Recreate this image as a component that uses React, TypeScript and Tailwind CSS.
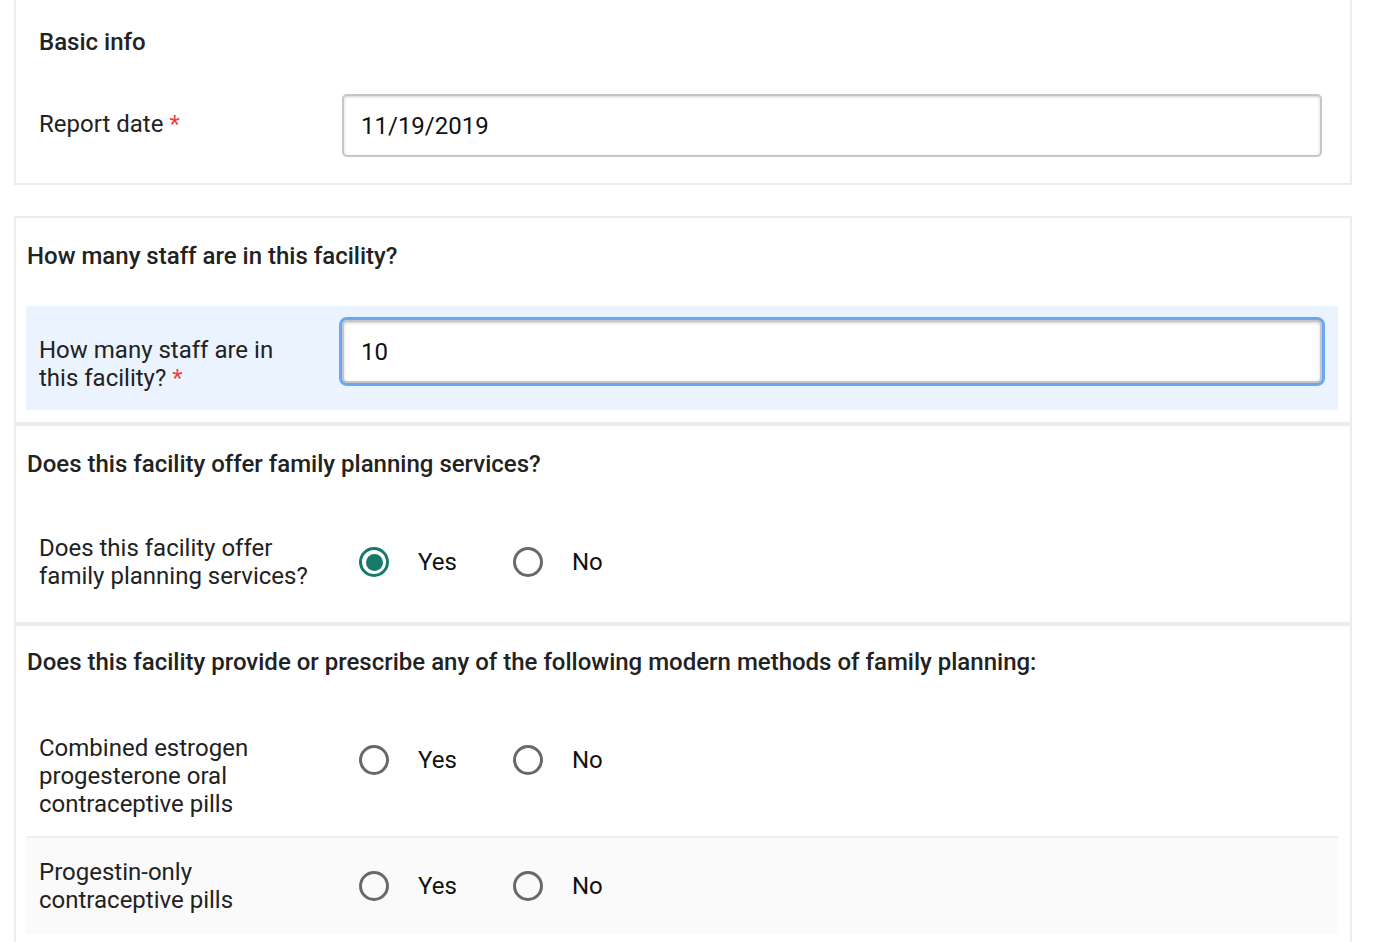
import React from "react";

const font = { fontFamily: "Roboto, 'Noto Sans', Arial, sans-serif" };

function Required() {
  return <span className="ml-[6px] text-[#ef4136]">*</span>;
}

function Label({ text, required }: { text: string; required?: boolean }) {
  return (
    <div className="w-[272px] pt-4 text-[24px] leading-[28px] text-[#222]">
      {text}
      {required && <Required />}
    </div>
  );
}

function TextInput({ value, focused }: { value: string; focused?: boolean }) {
  return (
    <div
      className={
        "flex h-[63px] items-center rounded-[5px] border-2 border-[#c6c6c6] bg-white pl-[17px] text-[24px] text-[#111] shadow-[inset_0_1px_3px_rgba(0,0,0,0.18)] " +
        (focused ? "outline-[3px] outline-solid outline-[#6aa6f4]" : "")
      }
    >
      {value}
    </div>
  );
}

function Radio({ checked }: { checked?: boolean }) {
  return (
    <div
      className={
        "flex h-[30px] w-[30px] items-center justify-center rounded-full border-[3px] " +
        (checked ? "border-[#157a6b]" : "border-[#686868]")
      }
    >
      {checked && <div className="h-[17px] w-[17px] rounded-full bg-[#157a6b]" />}
    </div>
  );
}

function YesNo({ value }: { value?: "yes" | "no" }) {
  return (
    <div className="flex h-14 items-center pl-[17px] text-[24px] text-[#111]">
      <div className="flex w-[154px] items-center">
        <Radio checked={value === "yes"} />
        <span className="ml-[29px]">Yes</span>
      </div>
      <div className="flex items-center">
        <Radio checked={value === "no"} />
        <span className="ml-[29px]">No</span>
      </div>
    </div>
  );
}

function SectionTitle({ children, tight }: { children: React.ReactNode; tight?: boolean }) {
  return (
    <h2
      className={
        "pl-[1px] text-[24px] leading-[28px] font-medium text-[#222] " + (tight ? "pt-[22px]" : "pt-6")
      }
    >
      {children}
    </h2>
  );
}

export default function App() {
  return (
    <div className="min-h-screen bg-white" style={font}>
      <div className="ml-[14px] w-[1338px]">
        {/* basic info */}
        <section className="border-2 border-t-0 border-[#e9edf1] pr-[12px] pb-[14px] pl-[10px]">
          <h2 className="pt-[28px] pl-[13px] text-[24px] leading-[28px] font-medium text-[#222]">
            Basic info
          </h2>
          <div className="mt-[26px] grid grid-cols-[303px_1fr] items-start pt-3 pr-4 pb-3 pl-[13px]">
            <Label text="Report date" required />
            <TextInput value="11/19/2019" />
          </div>
        </section>

        {/* staff */}
        <section className="mt-[31px] border-2 border-[#e9edf1] pr-[12px] pb-3 pl-[10px]">
          <SectionTitle>How many staff are in this facility?</SectionTitle>
          <div className="mt-9 grid grid-cols-[303px_1fr] items-start bg-[#ebf3fe] pt-[14px] pr-4 pb-[18px] pl-[13px]">
            <Label text="How many staff are in this facility?" required />
            <TextInput value="10" focused />
          </div>
        </section>

        {/* family planning */}
        <section className="border-2 border-[#e9edf1] pr-[12px] pb-3 pl-[10px]">
          <SectionTitle>Does this facility offer family planning services?</SectionTitle>
          <div className="mt-9 grid grid-cols-[303px_1fr] items-start py-5 pr-4 pl-[13px]">
            <div className="w-[272px] text-[24px] leading-[28px] text-[#222]">
              Does this facility offer family planning services?
            </div>
            <YesNo value="yes" />
          </div>
        </section>

        {/* methods */}
        <section className="border-2 border-[#e9edf1] pr-[12px] pb-3 pl-[10px]">
          <SectionTitle tight>
            Does this facility provide or prescribe any of the following modern methods of family planning:
          </SectionTitle>
          <div className="mt-9">
            <div className="grid grid-cols-[303px_1fr] items-start pt-5 pr-4 pb-[18px] pl-[13px]">
              <div className="w-[272px] pt-[2px] text-[24px] leading-[28px] text-[#222]">
                Combined estrogen progesterone oral contraceptive pills
              </div>
              <YesNo />
            </div>
            <div className="grid grid-cols-[303px_1fr] items-start border-t-2 border-[#f0f0f0] bg-[#fafafa] py-5 pr-4 pl-[13px]">
              <div className="w-[272px] text-[24px] leading-[28px] text-[#222]">
                Progestin-only contraceptive pills
              </div>
              <YesNo />
            </div>
          </div>
        </section>
      </div>
    </div>
  );
}
